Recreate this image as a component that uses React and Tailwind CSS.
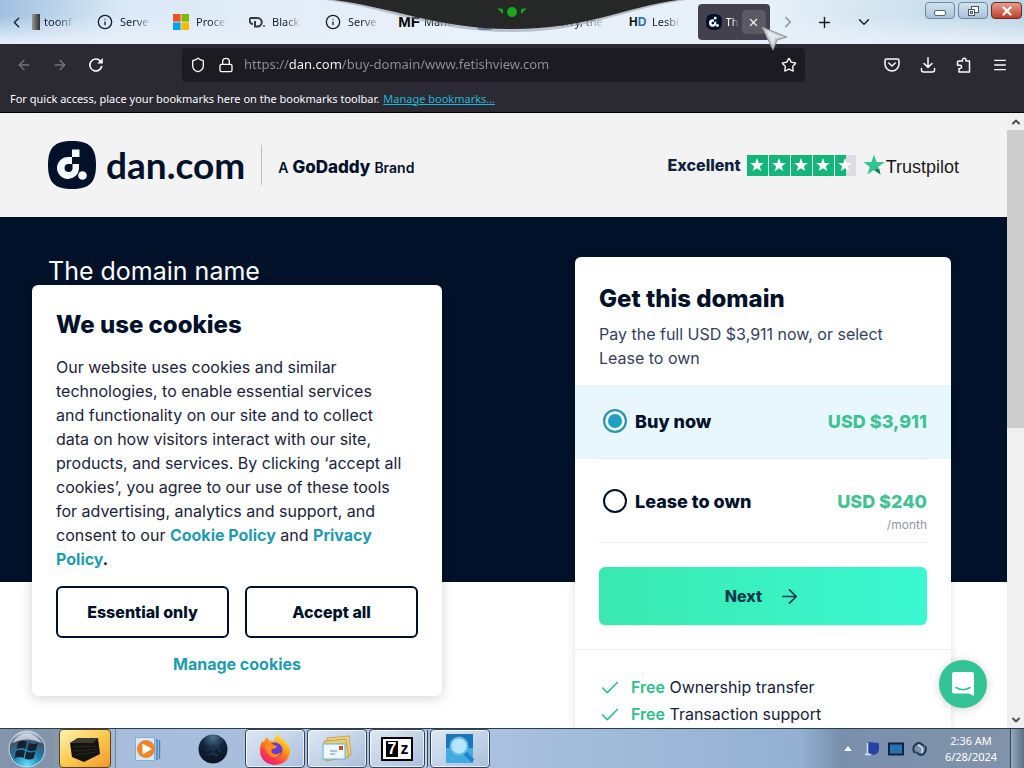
import React from "react";
import {
  ArrowLeft,
  ArrowRight,
  Check,
  ChevronDown,
  ChevronLeft,
  ChevronRight,
  ChevronUp,
  Info,
  Lock,
  Menu,
  Plus,
  Shield,
  Star,
  X,
} from "lucide-react";

const STAR = "M12 1.5 L14.6 9 L22.5 9.1 L16.2 13.9 L18.5 21.5 L12 17 L5.5 21.5 L7.8 13.9 L1.5 9.1 L9.4 9 Z";

const DanMark = ({ className }) => (
  <svg viewBox="0 0 48 48" className={className} aria-hidden="true">
    <path
      d="M24 0 C41 0 48 6 48 24 C48 42 41 48 24 48 C7 48 0 42 0 24 C0 6 7 0 24 0 Z"
      fill="#001129"
    />
    <path
      fillRule="evenodd"
      d="M24 16 V23 H20.5 A4 4 0 1 0 24.5 27.5 V23 H31 V27.5 A11 11 0 1 1 20 16 Z"
      fill="#f3f8fc"
    />
    <rect x="24" y="8.5" width="7.5" height="7.5" fill="#f3f8fc" />
    <circle cx="34.5" cy="34.5" r="4.3" fill="#f3f8fc" />
  </svg>
);

const WindowsColors = () => (
  <svg viewBox="0 0 16 16" className="size-4 shrink-0" aria-hidden="true">
    <rect width="7.6" height="7.6" fill="#f25022" />
    <rect x="8.4" width="7.6" height="7.6" fill="#7fba00" />
    <rect y="8.4" width="7.6" height="7.6" fill="#00a4ef" />
    <rect x="8.4" y="8.4" width="7.6" height="7.6" fill="#ffb900" />
  </svg>
);

const DRing = () => (
  <svg viewBox="0 0 16 16" className="size-4 shrink-0" fill="none" stroke="#333a44" strokeWidth="2" aria-hidden="true">
    <path d="M1 4 H8.5 A4.2 4.2 0 0 1 8.5 12.5 H6 V7 M1 4 C0 8 1.5 10 4 10" />
    <circle cx="15" cy="12" r="0.6" strokeWidth="1" />
  </svg>
);

const tabs = [
  { title: "Serve", icon: <Info size={16} strokeWidth={2} /> },
  { title: "Proce", icon: <WindowsColors /> },
  { title: "Black", icon: <DRing /> },
  { title: "Serve", icon: <Info size={16} strokeWidth={2} /> },
  { title: "Manu", icon: <span className="font-['Liberation_Sans'] text-[15px] font-black text-black">MF</span> },
  { title: "", icon: <span className="size-4 rounded-sm border-2 border-[#5b6cab]" /> },
];

const TabTitle = ({ children }) => (
  <span className="whitespace-nowrap [mask-image:linear-gradient(90deg,#000_50%,rgba(0,0,0,0.15))]">
    {children}
  </span>
);

const TabBar = () => (
  <div className="relative flex h-11 items-center bg-[linear-gradient(100deg,#9ec0e0_0%,#dbe9f6_12%,#e9f1fa_45%,#e6f0f8_75%,#b9d4e4_100%)] text-[11px] text-[#15202e]">
    <div className="absolute inset-x-0 bottom-0 h-7 bg-linear-to-b from-[#e8f0fa]/0 to-[#e8f0fa]" />
    <div className="relative flex min-w-0 flex-1 items-center">
      <button aria-label="Scroll tabs left" className="w-8 shrink-0 pl-2">
        <ChevronLeft size={17} />
      </button>
      <div className="flex w-[65px] shrink-0 items-center gap-1">
        <span className="h-4 w-2 bg-linear-to-r from-[#999] to-[#333]" />
        <TabTitle>toonf</TabTitle>
      </div>
      {tabs.map((tab, i) => (
        <div key={i} className="flex w-[76px] shrink-0 items-center gap-[7px]">
          <span className="flex w-4 shrink-0 justify-center">{tab.icon}</span>
          <TabTitle>{tab.title}</TabTitle>
        </div>
      ))}
      <div className="flex w-[76px] shrink-0">
        <TabTitle>Sorry, the</TabTitle>
      </div>
      <div className="flex w-[69px] shrink-0 items-center gap-[7px]">
        <span className="w-4 font-['Liberation_Sans'] text-xs font-bold text-[#111]">
          H<span className="text-[#2a6cb4]">D</span>
        </span>
        <TabTitle>Lesbi</TabTitle>
      </div>
      <div className="flex h-9 w-18 shrink-0 items-center justify-between rounded bg-[#42414d] pr-1 pl-2 text-white">
        <DanMark className="size-4 shrink-0" />
        <TabTitle>Th</TabTitle>
        <button aria-label="Close tab" className="flex size-6 shrink-0 items-center justify-center rounded bg-[#5a5964]">
          <X size={13} />
        </button>
      </div>
      <button aria-label="Scroll tabs right" className="flex w-9 shrink-0 justify-center text-[#8493a3]">
        <ChevronRight size={18} />
      </button>
      <button aria-label="New tab" className="flex w-9 shrink-0 justify-center">
        <Plus size={17} />
      </button>
      <button aria-label="List all tabs" className="flex w-11 shrink-0 justify-center">
        <ChevronDown size={18} />
      </button>
    </div>
    <div className="relative flex shrink-0 gap-[3px] self-start pt-0.5 pr-0.5">
      <button aria-label="Minimize" className="flex h-[17px] w-[30px] items-center justify-center rounded-sm border border-[#6f87a3] bg-linear-to-b from-[#d3e2f0] to-[#a9c2d8]">
        <span className="mt-1 h-1.5 w-3 rounded-xs border border-[#56657a] bg-white" />
      </button>
      <button aria-label="Restore" className="flex h-[17px] w-[30px] items-center justify-center rounded-sm border border-[#6f87a3] bg-linear-to-b from-[#d3e2f0] to-[#a9c2d8]">
        <svg viewBox="0 0 12 12" className="size-3" fill="#fff" stroke="#46566c">
          <rect x="4.5" y="1.5" width="7" height="6" />
          <rect x="1.5" y="4.5" width="6" height="6" />
          <rect x="3.5" y="6.5" width="2" height="2" />
        </svg>
      </button>
      <button aria-label="Close window" className="flex h-[17px] w-[31px] items-center justify-center rounded-sm border border-[#6b2a26] bg-linear-to-b from-[#e39c8d] to-[#c03a26] text-white">
        <X size={14} strokeWidth={4} />
      </button>
    </div>

    {/* remote session handle */}
    <svg viewBox="0 0 360 34" className="absolute top-0 left-[326px] h-[34px] w-[360px]" aria-hidden="true">
      <path d="M0 0 C60 8 110 32 186 32 C262 32 300 8 360 0 Z" fill="#8a8f94" opacity="0.5" />
      <path d="M8 0 C65 7 112 29 186 29 C260 29 300 7 352 0 Z" fill="#262727" />
      <g fill="#17a81b">
        <path d="M171 8 l6 1 v5 z M201 8 l-6 1 v5 z" />
        <circle cx="186" cy="12" r="5" />
      </g>
    </svg>
    {/* pointer */}
    <svg viewBox="0 0 28 26" className="absolute top-[26px] left-[761px] z-10 h-[26px] w-7" aria-hidden="true">
      <path d="M1 1 L26 11 L16 14 L12 24 Z" fill="#c3c8cc" stroke="#8d9297" />
      <path d="M5 4 L21 11 L14 12 L12 19 Z" fill="#e4e8ea" />
    </svg>
  </div>
);

const NavBar = () => (
  <div className="flex h-[42px] items-center bg-[#2b2a33] text-[#fbfbfe]">
    <div className="flex w-[182px] shrink-0 items-center gap-5 pl-4">
      <button aria-label="Back" className="text-[#77767e]">
        <ArrowLeft size={16} />
      </button>
      <button aria-label="Forward" className="text-[#77767e]">
        <ArrowRight size={16} />
      </button>
      <button aria-label="Reload">
        <svg viewBox="0 0 16 16" className="size-4" fill="none" stroke="currentColor" strokeWidth="1.6">
          <path d="M13.8 9 A6 6 0 1 1 12.5 4.2" />
          <path d="M14.8 1 V6.6 H9.2 Z" fill="currentColor" stroke="none" />
        </svg>
      </button>
    </div>
    <div className="flex h-[34px] min-w-0 flex-1 items-center rounded bg-[#1c1b22] pr-2 pl-2">
      <Shield size={16} className="shrink-0" />
      <Lock size={16} className="ml-3 shrink-0" />
      <input
        aria-label="Address"
        defaultValue="https://dan.com/buy-domain/www.fetishview.com"
        className="ml-2.5 min-w-0 flex-1 bg-[linear-gradient(90deg,#8f8f98_45px,#fbfbfe_45px,#fbfbfe_97px,#8f8f98_97px)] bg-clip-text text-[13px] text-transparent outline-none"
      />
      <button aria-label="Bookmark this page">
        <Star size={16} />
      </button>
    </div>
    <div className="flex w-[219px] shrink-0 items-center justify-end gap-5 pr-4">
      <button aria-label="Save to Pocket">
        <svg viewBox="0 0 16 16" className="size-4" fill="none" stroke="currentColor" strokeWidth="1.5" strokeLinecap="round" strokeLinejoin="round">
          <path d="M2.5 2 H13.5 Q15 2 15 3.5 V7 A7 7 0 0 1 1 7 V3.5 Q1 2 2.5 2 Z M4.8 6 L8 9 L11.2 6" />
        </svg>
      </button>
      <button aria-label="Downloads">
        <svg viewBox="0 0 16 16" className="size-4" fill="none" stroke="currentColor" strokeWidth="1.5" strokeLinecap="round" strokeLinejoin="round">
          <path d="M8 0.8 V10 M4 6.5 L8 10.4 L12 6.5 M1.5 11.5 V13 Q1.5 15 3.5 15 H12.5 Q14.5 15 14.5 13 V11.5" />
        </svg>
      </button>
      <button aria-label="Extensions">
        <svg viewBox="0 0 16 16" className="size-4" fill="none" stroke="currentColor" strokeWidth="1.5" strokeLinejoin="round">
          <path d="M3 4 H6.5 V3 A1.7 1.7 0 0 1 10 3 V4 H13.5 V15 H3 V11.5 H4 A1.5 1.5 0 0 0 4 8.2 H1.5 V5.5 Q1.5 4 3 4 Z" />
        </svg>
      </button>
      <button aria-label="Open menu">
        <Menu size={16} />
      </button>
    </div>
  </div>
);

const BookmarksBar = () => (
  <div className="flex h-[27px] items-center gap-1 border-b border-black bg-[#2b2a33] px-2.5 text-[11px] whitespace-nowrap text-[#fbfbfe]">
    <span>For quick access, place your bookmarks here on the bookmarks toolbar.</span>
    <a href="#" className="text-[#1fb6dc] underline">
      Manage bookmarks…
    </a>
  </div>
);

const Rating = () => (
  <div className="flex items-center">
    <span className="text-base font-extrabold text-[#0d2340]">Excellent</span>
    <div className="ml-1.5 flex gap-px">
      {[1, 2, 3, 4, 5].map((n) => (
        <span
          key={n}
          className={
            n < 5
              ? "flex size-[21px] items-center justify-center bg-[#12b67a]"
              : "flex size-[21px] items-center justify-center bg-linear-to-r from-[#12b67a] from-50% to-[#dcdce2] to-50%"
          }
        >
          <svg viewBox="0 0 24 24" className="size-4" fill="#fff" aria-hidden="true">
            <path d={STAR} />
          </svg>
        </span>
      ))}
    </div>
    <svg viewBox="0 0 24 24" className="ml-1.5 size-6" aria-hidden="true">
      <path d={STAR} fill="#33c58f" />
      <path d="M12 17 L17.2 15.6 L18.5 21.5 Z" fill="#128056" />
    </svg>
    <span className="mt-1 font-['Liberation_Sans'] text-[18px] text-[#191919]">Trustpilot</span>
  </div>
);

const SiteHeader = () => (
  <header className="flex h-26 shrink-0 items-center justify-between bg-[#f3f3f4] pr-12 pl-12 text-[#001129]">
    <div className="flex items-center">
      <DanMark className="size-12" />
      <span className="ml-2.5 font-['Lato'] text-[37px] leading-10 font-bold">dan.com</span>
      <span className="ml-4 h-10 w-px bg-[#b9bbc2]" />
      <span className="mt-1.5 ml-4 flex items-baseline gap-1 text-[14px] font-semibold">
        A <span className="text-[17px] font-extrabold">GoDaddy</span> Brand
      </span>
    </div>
    <Rating />
  </header>
);

const Option = ({ label, price, note, checked }) => (
  <label className={checked ? "block bg-[#e8f7fe] px-6" : "block px-6"}>
    <span
      className={
        note
          ? "flex h-[82px] border-b border-[#e8eaec] pt-7 pl-1"
          : "flex h-[74px] border-b border-[#e8eaec] pt-6 pl-1"
      }
    >
      <input
        type="radio"
        name="plan"
        defaultChecked={checked}
        className="size-6 shrink-0 appearance-none rounded-full border-2 border-[#001129] checked:border-[#2f93ae] checked:bg-[#1fa0be] checked:shadow-[inset_0_0_0_3px_#e8f7fe]"
      />
      <span className="ml-2 flex-1 text-[18px] leading-[26px] font-extrabold text-[#001129]">{label}</span>
      <span className="text-right">
        <span className="block text-[18px] leading-[26px] font-extrabold text-[#3fc394]">{price}</span>
        {note && <span className="block text-xs leading-5 text-[#93979f]">{note}</span>}
      </span>
    </span>
  </label>
);

const OfferCard = () => (
  <form className="w-94 rounded-md bg-white pt-6 shadow-[0_0_10px_rgba(0,0,0,0.12)]" onSubmit={(e) => e.preventDefault()}>
    <div className="px-6 pb-[15px]">
      <h2 className="text-2xl leading-9 font-extrabold text-[#001129]">Get this domain</h2>
      <p className="mt-[5px] text-base leading-6 text-[#33415c]">
        Pay the full USD $3,911 now, or select
        <br />
        Lease to own
      </p>
    </div>
    <Option label="Buy now" price="USD $3,911" checked />
    <div className="h-0.5" />
    <Option label="Lease to own" price="USD $240" note="/month" />
    <div className="border-b border-[#e8eaec] px-6 py-6">
      <button className="flex h-[58px] w-full items-center justify-center gap-4 rounded-md bg-linear-to-r from-[#39e9ae] to-[#3bf8d2] text-base font-extrabold text-[#0c3a4d] shadow-sm">
        Next <ArrowRight size={23} strokeWidth={1.8} />
      </button>
    </div>
    <ul className="px-6 py-6 text-base leading-[27px] text-[#16213a]">
      {["Ownership transfer", "Transaction support"].map((item) => (
        <li key={item} className="flex items-center">
          <Check size={22} strokeWidth={1.8} className="mr-2.5 text-[#2fbf8c]" />
          <span>
            <span className="font-semibold text-[#2fbf8c]">Free</span> {item}
          </span>
        </li>
      ))}
    </ul>
  </form>
);

const CookieDialog = () => (
  <section
    aria-label="We use cookies"
    className="absolute bottom-8 left-8 w-[410px] rounded-md bg-white px-6 pt-5 pb-5 text-[#001129] shadow-[0_2px_12px_rgba(0,0,0,0.18)]"
  >
    <h2 className="text-2xl leading-10 font-extrabold">We use cookies</h2>
    <p className="mt-2.5 text-base leading-6 whitespace-nowrap text-[#1a2338]">
      Our website uses cookies and similar
      <br />
      technologies, to enable essential services
      <br />
      and functionality on our site and to collect
      <br />
      data on how visitors interact with our site,
      <br />
      products, and services. By clicking ‘accept all
      <br />
      cookies’, you agree to our use of these tools
      <br />
      for advertising, analytics and support, and
      <br />
      consent to our{" "}
      <a href="#" className="font-bold text-[#1e9cb0]">
        Cookie Policy
      </a>{" "}
      and{" "}
      <a href="#" className="font-bold text-[#1e9cb0]">
        Privacy
        <br />
        Policy
      </a>
      <b>.</b>
    </p>
    <div className="mt-[15px] flex gap-4 text-base font-extrabold">
      <button className="h-13 flex-1 rounded-md border-2 border-[#001129]">Essential only</button>
      <button className="h-13 flex-1 rounded-md border-2 border-[#001129]">Accept all</button>
    </div>
    <button className="mt-3.5 block w-full text-base leading-6 font-bold text-[#1e9cb0]">Manage cookies</button>
  </section>
);

const Scrollbar = () => (
  <div className="flex w-[17px] shrink-0 flex-col items-center bg-[#f0f0f0] text-[#505050]">
    <span className="flex h-[17px] items-center">
      <ChevronUp size={12} strokeWidth={4} />
    </span>
    <div className="h-[298px] w-full bg-[#cdcdcd]" />
    <span className="mt-auto flex h-[17px] items-center">
      <ChevronDown size={12} strokeWidth={4} />
    </span>
  </div>
);

const TaskButton = ({ label, children, className = "w-15" }) => (
  <button
    aria-label={label}
    className={`${className} flex h-full shrink-0 items-center justify-center rounded-sm border border-[#33455e] bg-linear-to-br from-[#dfe8f3] to-[#a9bfdb] shadow-[inset_0_0_0_1px_rgba(255,255,255,0.7)]`}
  >
    {children}
  </button>
);

const Taskbar = () => (
  <footer className="flex h-10 shrink-0 items-center border-t border-[#2c3c50] bg-[linear-gradient(90deg,#8495ab_0px,#8495ab_52px,#a6bddb_120px,#a9c0de_500px,#93b0d2_800px,#7990ad_840px,#8193a9_100%)] font-['Noto_Sans']">
    <button aria-label="Start" className="flex w-[59px] shrink-0 justify-center pr-1.5">
      <svg viewBox="0 0 38 38" className="size-[38px]">
        <defs>
          <radialGradient id="orb" cx="50%" cy="95%" r="90%">
            <stop offset="0" stopColor="#5fe3ff" />
            <stop offset="0.45" stopColor="#1f7fae" />
            <stop offset="0.8" stopColor="#43536a" />
            <stop offset="1" stopColor="#b6c6d5" />
          </radialGradient>
        </defs>
        <circle cx="19" cy="19" r="18" fill="url(#orb)" stroke="#c9dbe8" />
        <path d="M4 13 Q19 -6 34 13 Q19 6 4 13 Z" fill="#dce5ec" opacity="0.75" />
        <path d="M10 12 q5 -3 9 0 l-1.5 7 q-4 -2 -9 0 z M21 12.5 q5 3 9 0 l-2 7.5 q-4 2 -9 0 z M8 21 q5 -2 9 0 l-1.5 7 q-4 -2 -9 0 z M18.5 21.5 q4 2 9 0 l-2 7 q-4 2 -9 0 z" fill="#17222f" />
      </svg>
    </button>
    <button aria-label="Remote desktop" className="flex h-full w-[52px] shrink-0 items-center justify-center rounded-sm border border-[#5a4215] bg-linear-to-br from-[#fff3b0] via-[#fbc94f] to-[#f09a2e]">
      <svg viewBox="0 0 34 30" className="h-[30px] w-[34px]">
        <path d="M2 9 L10 4 L30 4 L32 20 L16 28 L4 23 Z" fill="#15130f" />
        <path d="M2 9 L10 4 L30 4 L25 9 Z" fill="#3d3a34" />
        <path d="M6 13 L28 12 M6 17 L29 15 M7 21 L29 18" stroke="#2c2a26" />
      </svg>
    </button>
    <span className="ml-1 h-full w-px bg-[#6f839d]" />
    <button aria-label="Media player" className="flex w-16 shrink-0 justify-center">
      <svg viewBox="0 0 26 24" className="h-6 w-[26px]">
        <rect x="0.5" y="0.5" width="19" height="23" fill="#d7e9f6" stroke="#7fb0d8" />
        <path d="M22 2 V23 M24.5 3 V22" stroke="#3e84bd" strokeWidth="1.4" />
        <circle cx="11" cy="12" r="9" fill="#ef8328" />
        <path d="M7.5 6.5 L17 12 L7.5 17.5 Z" fill="#fff" />
      </svg>
    </button>
    <button aria-label="Globe" className="flex w-[65px] shrink-0 justify-center">
      <svg viewBox="0 0 30 30" className="size-[30px]">
        <defs>
          <radialGradient id="globe" cx="50%" cy="10%" r="80%">
            <stop offset="0" stopColor="#4c7393" />
            <stop offset="0.5" stopColor="#12263d" />
            <stop offset="1" stopColor="#0b1626" />
          </radialGradient>
        </defs>
        <circle cx="15" cy="15" r="14.5" fill="url(#globe)" />
        <path d="M9 17 l3 -4 l3 4 l4 -5 l3 6 M11 21 l4 -2 l5 3" fill="none" stroke="#2d435a" />
      </svg>
    </button>
    <div className="flex h-full gap-0.5">
      <TaskButton label="Firefox">
        <svg viewBox="0 0 32 32" className="size-8">
          <defs>
            <linearGradient id="fox" x1="0.8" y1="0" x2="0.2" y2="1">
              <stop offset="0" stopColor="#fff44f" />
              <stop offset="0.4" stopColor="#ff980e" />
              <stop offset="0.75" stopColor="#ff3750" />
              <stop offset="1" stopColor="#e31587" />
            </linearGradient>
          </defs>
          <path d="M3 8 L5 9 L7 4 L11 8 L15 8 Q16 3 20 1 Q21 5 26 8 Q31 13 31 18 A15 14 0 0 1 1 18 Q1 12 3 8 Z" fill="url(#fox)" />
          <circle cx="16" cy="17" r="7.5" fill="#6a3bd1" />
          <path d="M6 10 Q11 9 15 12 L18 13 Q17 16 13 16 Q11 19 15 21 Q19 22 22 19 Q20 26 13 24 Q6 21 6 10 Z" fill="#ff8a1c" />
        </svg>
      </TaskButton>
      <TaskButton label="Mail">
        <svg viewBox="0 0 32 28" className="h-7 w-8">
          <path d="M6 3 L28 1 L30 20 L8 24 Z" fill="#f0d684" stroke="#c9a74c" />
          <path d="M3 6 L25 4 L28 22 L5 26 Z" fill="#e5cc78" stroke="#b9a258" />
          <rect x="2" y="9" width="22" height="15" fill="#eef8fc" stroke="#62b6d6" />
          <rect x="18" y="11" width="4" height="4" fill="#c64a39" />
          <path d="M9 16 H16 M9 19 H14" stroke="#6e8aa5" />
        </svg>
      </TaskButton>
      <TaskButton label="7-Zip" className="w-[56px]">
        <span className="flex h-6 w-8 items-center justify-center border-2 border-black bg-white font-['Liberation_Sans'] text-base leading-4 font-bold text-black">
          <span className="bg-black px-0.5 text-white">7</span>
          <span className="pl-0.5">z</span>
        </span>
      </TaskButton>
      <span className="-ml-0.5 h-full w-[3px] rounded-r-sm border-r border-[#33455e] bg-[#c6d5e6]" />
      <TaskButton label="Search">
        <svg viewBox="0 0 30 32" className="h-8 w-[30px]">
          <rect x="1" y="1" width="27" height="14" fill="#1c74b9" />
          <rect x="1" y="15" width="27" height="15" fill="#3fabe0" />
          <path d="M19 19 L28 28" stroke="#1d86cb" strokeWidth="4" />
          <circle cx="14" cy="13" r="8.5" fill="#b6e6fb" stroke="#64bceb" strokeWidth="2" />
        </svg>
      </TaskButton>
    </div>
    <div className="ml-auto flex h-full items-center">
      <svg viewBox="0 0 8 5" className="h-[5px] w-2" aria-hidden="true">
        <path d="M4 0 L8 5 H0 Z" fill="#f5f8fb" />
      </svg>
      <svg viewBox="0 0 16 16" className="ml-3 size-4" aria-hidden="true">
        <path d="M4 1 L15 2 V9 Q14 13 10 14 L4 12 Z" fill="#2942a8" />
        <path d="M3.5 2 V13 M1 13.5 H7" stroke="#d7e2f1" strokeWidth="1.5" />
      </svg>
      <svg viewBox="0 0 16 14" className="ml-2 h-3.5 w-4" aria-hidden="true">
        <rect x="1" y="1.5" width="14" height="11" fill="#2474b5" stroke="#10243b" strokeWidth="2" />
      </svg>
      <svg viewBox="0 0 16 16" className="ml-2 size-4" fill="none" strokeWidth="2" aria-hidden="true">
        <path d="M3 12 A6 6 0 0 1 8 2 L12 5 M13 5 A6 6 0 0 1 8 14 L4 11" stroke="#1c3a58" />
        <path d="M6 4 Q12 6 10 12" stroke="#dce8f2" strokeWidth="1.5" />
      </svg>
      <div className="w-[82px] pl-1 text-center text-[11px] leading-4 whitespace-nowrap text-white">
        2:36 AM
        <br />
        6/28/2024
      </div>
      <button aria-label="Show desktop" className="h-full w-3.5 border-l border-[#33455e] bg-linear-to-r from-[#97a9bd] to-[#5d7087]" />
    </div>
  </footer>
);

const App = () => {
  return (
    <div className="flex h-screen flex-col overflow-hidden font-['Noto_Sans',sans-serif]">
      <TabBar />
      <NavBar />
      <BookmarksBar />
      <div className="flex min-h-0 flex-1 font-['Inter',sans-serif]">
        <div className="relative flex min-w-0 flex-1 flex-col overflow-hidden">
          <SiteHeader />
          <main className="flex flex-1 items-start justify-between bg-[linear-gradient(#001129_365px,#ffffff_365px)] pt-10 pr-14 pl-12">
            <h1 className="text-[25px] leading-7 text-white">The domain name</h1>
            <OfferCard />
          </main>
          <CookieDialog />
          <button
            aria-label="Open chat"
            className="absolute right-5 bottom-5 flex size-12 items-center justify-center rounded-full bg-[#32c496] shadow-[0_1px_8px_rgba(0,0,0,0.2)]"
          >
            <svg viewBox="0 0 24 26" className="h-[26px] w-6">
              <path d="M3 1 H21 Q23 1 23 3 V25 L18 22.5 H3 Q1 22.5 1 20.5 V3 Q1 1 3 1 Z" fill="#fff" />
              <path d="M5 16.500 Q12 21 19 16.500" fill="none" stroke="#32c496" strokeWidth="1.5" strokeLinecap="round" />
            </svg>
          </button>
        </div>
        <Scrollbar />
      </div>
      <Taskbar />
    </div>
  );
};

export default App;
